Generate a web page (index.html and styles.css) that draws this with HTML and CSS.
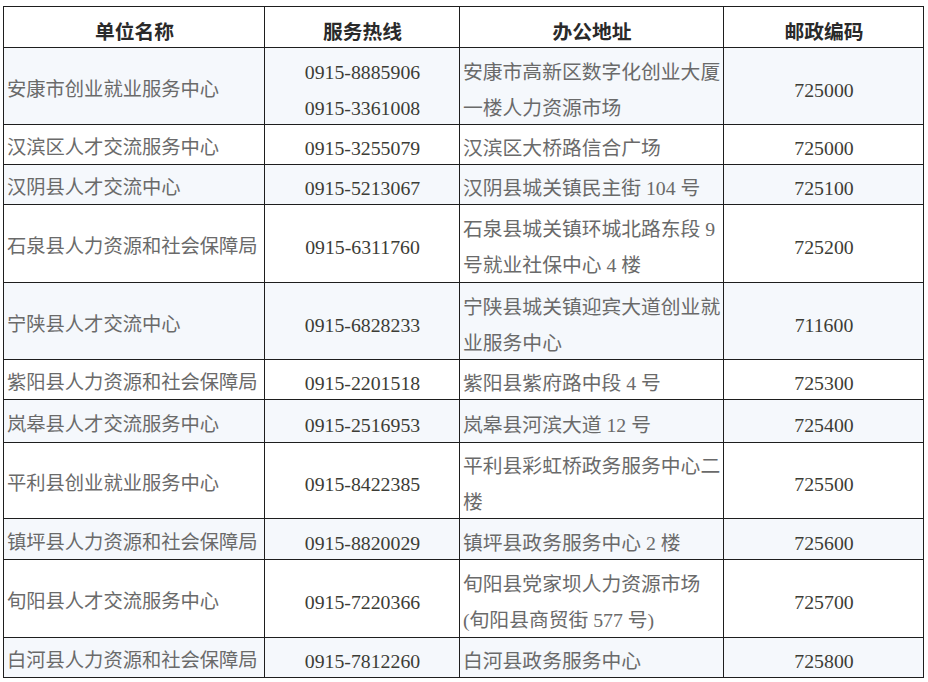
FILE: index.html
```html
<!DOCTYPE html>
<html lang="zh-CN">
<head>
<meta charset="utf-8">
<title>服务机构</title>
<link rel="stylesheet" href="styles.css">
</head>
<body>
<div class="page">
<table class="tbl">
  <colgroup>
    <col class="c1"><col class="c2"><col class="c3"><col class="c4">
  </colgroup>
  <thead>
    <tr class="head h41">
      <th>单位名称</th><th>服务热线</th><th>办公地址</th><th>邮政编码</th>
    </tr>
  </thead>
  <tbody>
    <tr class="alt h77">
      <td class="name"><span class="ln">安康市创业就业服务中心</span></td>
      <td class="num"><span class="ln">0915-8885906</span><span class="ln">0915-3361008</span></td>
      <td class="addr"><span class="ln">安康市高新区数字化创业大厦</span><span class="ln">一楼人力资源市场</span></td>
      <td class="num"><span class="ln">725000</span></td>
    </tr>
    <tr class="h40">
      <td class="name"><span class="ln">汉滨区人才交流服务中心</span></td>
      <td class="num"><span class="ln">0915-3255079</span></td>
      <td class="addr"><span class="ln">汉滨区大桥路信合广场</span></td>
      <td class="num"><span class="ln">725000</span></td>
    </tr>
    <tr class="alt h40">
      <td class="name"><span class="ln">汉阴县人才交流中心</span></td>
      <td class="num"><span class="ln">0915-5213067</span></td>
      <td class="addr"><span class="ln">汉阴县城关镇民主街 104 号</span></td>
      <td class="num"><span class="ln">725100</span></td>
    </tr>
    <tr class="h78">
      <td class="name"><span class="ln">石泉县人力资源和社会保障局</span></td>
      <td class="num"><span class="ln">0915-6311760</span></td>
      <td class="addr"><span class="ln">石泉县城关镇环城北路东段 9</span><span class="ln">号就业社保中心 4 楼</span></td>
      <td class="num"><span class="ln">725200</span></td>
    </tr>
    <tr class="alt h77">
      <td class="name"><span class="ln">宁陕县人才交流中心</span></td>
      <td class="num"><span class="ln">0915-6828233</span></td>
      <td class="addr"><span class="ln">宁陕县城关镇迎宾大道创业就</span><span class="ln">业服务中心</span></td>
      <td class="num"><span class="ln">711600</span></td>
    </tr>
    <tr class="h40">
      <td class="name"><span class="ln">紫阳县人力资源和社会保障局</span></td>
      <td class="num"><span class="ln">0915-2201518</span></td>
      <td class="addr"><span class="ln">紫阳县紫府路中段 4 号</span></td>
      <td class="num"><span class="ln">725300</span></td>
    </tr>
    <tr class="alt h43">
      <td class="name"><span class="ln">岚皋县人才交流服务中心</span></td>
      <td class="num"><span class="ln">0915-2516953</span></td>
      <td class="addr"><span class="ln">岚皋县河滨大道 12 号</span></td>
      <td class="num"><span class="ln">725400</span></td>
    </tr>
    <tr class="h76">
      <td class="name"><span class="ln">平利县创业就业服务中心</span></td>
      <td class="num"><span class="ln">0915-8422385</span></td>
      <td class="addr"><span class="ln">平利县彩虹桥政务服务中心二</span><span class="ln">楼</span></td>
      <td class="num"><span class="ln">725500</span></td>
    </tr>
    <tr class="alt h41">
      <td class="name"><span class="ln">镇坪县人力资源和社会保障局</span></td>
      <td class="num"><span class="ln">0915-8820029</span></td>
      <td class="addr"><span class="ln">镇坪县政务服务中心 2 楼</span></td>
      <td class="num"><span class="ln">725600</span></td>
    </tr>
    <tr class="h78">
      <td class="name"><span class="ln">旬阳县人才交流服务中心</span></td>
      <td class="num"><span class="ln">0915-7220366</span></td>
      <td class="addr"><span class="ln">旬阳县党家坝人力资源市场</span><span class="ln">(旬阳县商贸街 577 号)</span></td>
      <td class="num"><span class="ln">725700</span></td>
    </tr>
    <tr class="alt h39">
      <td class="name"><span class="ln">白河县人力资源和社会保障局</span></td>
      <td class="num"><span class="ln">0915-7812260</span></td>
      <td class="addr"><span class="ln">白河县政务服务中心</span></td>
      <td class="num"><span class="ln">725800</span></td>
    </tr>
  </tbody>
</table>
</div>
</body>
</html>
```

FILE: styles.css
```css
html, body {
  margin: 0;
  padding: 0;
  background: #ffffff;
}

.page {
  padding: 6px 0 0 3px;
}

.tbl {
  border-collapse: collapse;
  table-layout: fixed;
  width: 921px;
  font-family: "Liberation Serif", "Noto Sans CJK SC", serif;
  font-size: 19.8px;
  color: #6a6a6a;
}

.c1 { width: 261px; }
.c2 { width: 195px; }
.c3 { width: 264px; }
.c4 { width: 200px; }

.tbl th,
.tbl td {
  border: 1px solid #1e1e1e;
  padding: 8px 2px 1px 3px;
  vertical-align: middle;
  text-align: left;
  white-space: nowrap;
  overflow: hidden;
}

.tbl th {
  font-weight: bold;
  color: #2a2a2a;
  text-align: center;
  padding-bottom: 2px;
}

.h39 { height: 39px; }
.h40 { height: 40px; }
.h41 { height: 41px; }
.h43 { height: 43px; }
.h76 { height: 76px; }
.h77 { height: 77px; }
.h78 { height: 78px; }

.ln {
  display: block;
  line-height: 30px;
}

.ln + .ln {
  margin-top: 6px;
}

.tbl td.num {
  text-align: center;
  color: #3c3c36;
}

.tbl td.name {
  padding-left: 3px;
  font-size: 19.3px;
}

.tbl td.addr {
  padding-left: 3px;
}

.alt td {
  background: #f5f8fc;
}
```
